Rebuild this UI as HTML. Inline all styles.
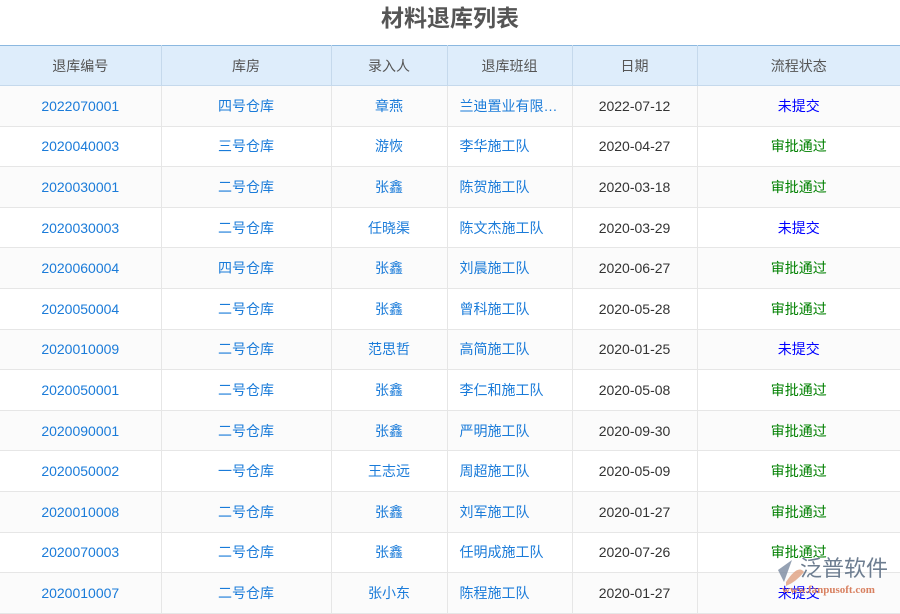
<!DOCTYPE html><html><head><meta charset="utf-8"><style>
body{margin:0;width:900px;height:600px;overflow:hidden;background:#fff;font-family:"Liberation Sans","Noto Sans CJK SC",sans-serif;}
h1{margin:0;height:45px;line-height:36px;text-align:center;font-size:23px;color:#555;font-weight:bold;}
table{border-collapse:collapse;width:900px;table-layout:fixed;position:absolute;top:45px;left:0;}
th{background:#deedfb;color:#555;font-weight:normal;font-size:14px;height:39px;padding:0;border:1px solid #c5d9ec;border-top:1px solid #8bb8e0;}
td{height:39.6px;padding:0;border:1px solid #e6e6e6;text-align:center;font-size:14px;color:#1a7bd9;white-space:nowrap;overflow:hidden;}
tr:nth-child(even) td{background:#fbfbfb;}
td.l{text-align:left;padding-left:12px;padding-right:12px;text-overflow:ellipsis}
td.d{color:#333}
.g{color:#008000}.b{color:#0000ff}
th:first-child,td:first-child{border-left:none}th:last-child,td:last-child{border-right:none}
.logo{position:absolute;left:770px;top:552px;}
</style></head><body>
<h1>材料退库列表</h1>
<table><colgroup><col style="width:161px"><col style="width:170px"><col style="width:116px"><col style="width:125px"><col style="width:125px"><col></colgroup>
<tr><th>退库编号</th><th>库房</th><th>录入人</th><th>退库班组</th><th>日期</th><th>流程状态</th></tr>
<tr><td>2022070001</td><td>四号仓库</td><td>章燕</td><td class="l">兰迪置业有限公司</td><td class="d">2022-07-12</td><td class="b">未提交</td></tr>
<tr><td>2020040003</td><td>三号仓库</td><td>游恢</td><td class="l">李华施工队</td><td class="d">2020-04-27</td><td class="g">审批通过</td></tr>
<tr><td>2020030001</td><td>二号仓库</td><td>张鑫</td><td class="l">陈贺施工队</td><td class="d">2020-03-18</td><td class="g">审批通过</td></tr>
<tr><td>2020030003</td><td>二号仓库</td><td>任晓渠</td><td class="l">陈文杰施工队</td><td class="d">2020-03-29</td><td class="b">未提交</td></tr>
<tr><td>2020060004</td><td>四号仓库</td><td>张鑫</td><td class="l">刘晨施工队</td><td class="d">2020-06-27</td><td class="g">审批通过</td></tr>
<tr><td>2020050004</td><td>二号仓库</td><td>张鑫</td><td class="l">曾科施工队</td><td class="d">2020-05-28</td><td class="g">审批通过</td></tr>
<tr><td>2020010009</td><td>二号仓库</td><td>范思哲</td><td class="l">高简施工队</td><td class="d">2020-01-25</td><td class="b">未提交</td></tr>
<tr><td>2020050001</td><td>二号仓库</td><td>张鑫</td><td class="l">李仁和施工队</td><td class="d">2020-05-08</td><td class="g">审批通过</td></tr>
<tr><td>2020090001</td><td>二号仓库</td><td>张鑫</td><td class="l">严明施工队</td><td class="d">2020-09-30</td><td class="g">审批通过</td></tr>
<tr><td>2020050002</td><td>一号仓库</td><td>王志远</td><td class="l">周超施工队</td><td class="d">2020-05-09</td><td class="g">审批通过</td></tr>
<tr><td>2020010008</td><td>二号仓库</td><td>张鑫</td><td class="l">刘军施工队</td><td class="d">2020-01-27</td><td class="g">审批通过</td></tr>
<tr><td>2020070003</td><td>二号仓库</td><td>张鑫</td><td class="l">任明成施工队</td><td class="d">2020-07-26</td><td class="g">审批通过</td></tr>
<tr><td>2020010007</td><td>二号仓库</td><td>张小东</td><td class="l">陈程施工队</td><td class="d">2020-01-27</td><td class="b">未提交</td></tr>
</table>
<div class="logo"><svg width="130" height="45"><path d="M8 18 L22 8 L14 30 Z" fill="#7a8aa0" opacity=".8"/><path d="M16 30 Q28 12 34 20 Q26 30 16 34Z" fill="#e0a080" opacity=".8"/><text x="30" y="24" font-size="22" fill="#6d7d90" font-family="Noto Sans CJK SC,sans-serif">泛普软件</text><text x="12" y="41" font-size="11" fill="#d88060" font-weight="bold" font-family="Liberation Serif,serif">www.fanpusoft.com</text></svg></div>
</body></html>
